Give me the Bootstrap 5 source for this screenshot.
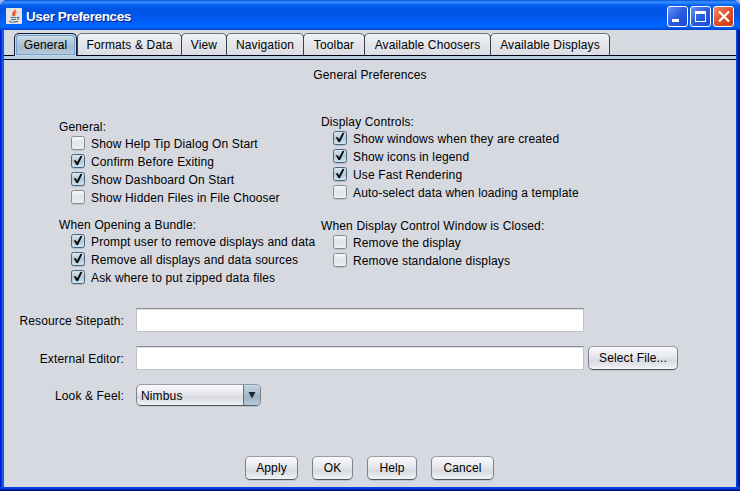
<!DOCTYPE html>
<html lang="en">
<head>
<meta charset="utf-8">
<title>User Preferences</title>
<link href="https://cdn.jsdelivr.net/npm/bootstrap@5.3.0/dist/css/bootstrap.min.css" rel="stylesheet">
<style>
body{width:740px;height:491px;overflow:hidden;background:#9fb8e8;font:12px/18px "Liberation Sans",Arial,sans-serif;letter-spacing:.14px;color:#000}
.win{width:740px;height:491px;background:linear-gradient(90deg,#0019cf 0,#0019cf 1px,#0831d9 1px,#0831d9 2px,#166aee 2px,#0855dd 4px,#0046e0 4px,#0046e0 737px,#0030d0 737px,#001590 739px);border-radius:7px 7px 0 0;padding:0 4px 4px;box-shadow:inset 0 -2px #001a9c,inset 0 -4px #0a3fe0}
.titlebar{height:30px;margin:0 -4px;padding:6px 6px 0;border-radius:7px 7px 0 0;background:linear-gradient(#0350d8 0,#3b92ff 2px,#2684ff 3px,#0863f2 5px,#0054e3 9px,#0055e5 14px,#005ff6 21px,#0066ff 25px,#0064fa 27px,#003fce 30px)}
.titlebar h1{font:bold 13.500px/20px "Liberation Sans",Arial,sans-serif;letter-spacing:-.38px;color:#fff;text-shadow:1px 1px #0a1883;margin:1px 0 0 4px}
.appicon{margin-top:2px}
.pane{height:457px;background:#d6d9e0}
.tabs{height:30px;padding:3px 0 0 10px;background:linear-gradient(#000019 0,#000019 1px,#b8cfe0 1px,#b8cfe0 4px,#000019 4px) 0 25px/100% 5px no-repeat}
.tabs .tab{height:23px;border:1px solid #33424c;border-top:1px solid #6f747c;border-bottom-color:#000019;border-radius:5px 5px 0 0;background:linear-gradient(#f2f3f6,#e4e5ea 50%,#dcdee4);text-align:center;line-height:22px;margin-right:-1px;white-space:nowrap}
.tabs .tab.active{background:linear-gradient(#d6e1ea,#adc1d0 48%,#a5bacb 55%,#bccedb);border-color:#141f33;border-bottom:0;box-shadow:inset 0 0 0 1px #c3d7e8,inset 0 0 0 2px #73a4d1;margin-right:0}
.head{margin-top:6px}
.opts{margin-top:29px;height:181px}
.colA{padding:5px 0 0 55px;margin-right:55px;box-sizing:content-box;width:207px}
.optrow{height:18px;white-space:nowrap}
.grp{padding-left:12px;margin-top:-1px}
.cb{width:14px;height:15px;margin:0 6px 2px 0;flex:none}
.second{margin-top:9px}
.third{margin-top:15px}
.form-area{padding-top:14px}
.frow{height:25px;margin-bottom:13px}
.frow:last-child{height:23px;margin-bottom:0}
.lbl{width:120px;margin-right:12px;text-align:right;line-height:26px}
.frow:last-child .lbl{line-height:24px}
.field{width:448px;height:24px;border:1px solid #c0c3c8;border-top-color:#8d8f94;border-radius:0;background:#fff;box-shadow:inset 0 1px #dcdde0;padding:0}
.nbtn{height:24px;border:1px solid #7d8188;border-color:#979ba3 #7d8188 #53575e;border-radius:5px;background:linear-gradient(#fafafc,#e7e8ec 45%,#d8dae1 60%,#e6e8ee 85%,#f2f4f8);box-shadow:0 1px #bfc2c8;padding:0;font:inherit;letter-spacing:inherit;line-height:23px;color:#000;text-align:center}
.combo{width:125px;height:22px;overflow:hidden}
.combo .val{padding-left:4px;line-height:22px}
.combo .arrow{width:17px;background:linear-gradient(#c6d6e2,#a4bacb 50%,#9ab2c5 55%,#b5cada);border-left:1px solid #55758f}
.foot{margin:49px 0 0 241px;gap:14px}
</style>
</head>
<body>
<svg class="position-absolute" width="0" height="0">
<defs>
<linearGradient id="go" x2="0" y2="1"><stop stop-color="#f9f9fb"/><stop offset=".5" stop-color="#e2e4e8"/><stop offset="1" stop-color="#f0f1f5"/></linearGradient>
<linearGradient id="gc" x2="0" y2="1"><stop stop-color="#e2eaf1"/><stop offset=".5" stop-color="#b3c8d8"/><stop offset="1" stop-color="#d2e5f3"/></linearGradient>
<linearGradient id="gb" x2="1" y2="1"><stop stop-color="#6a94f2"/><stop offset=".5" stop-color="#2a5be0"/><stop offset="1" stop-color="#1b4ccc"/></linearGradient>
<linearGradient id="gr" x2="1" y2="1"><stop stop-color="#ee8c70"/><stop offset=".5" stop-color="#e05028"/><stop offset="1" stop-color="#c83a14"/></linearGradient>
</defs>
<symbol id="off" viewBox="0 0 14 15"><rect x=".5" y="1.500" width="13" height="13" rx="2" fill="none" stroke="#bcc0c8"/><rect x=".5" y=".5" width="13" height="13" rx="2" fill="url(#go)" stroke="#878b92"/></symbol>
<symbol id="on" viewBox="0 0 14 15"><rect x=".5" y="1.500" width="13" height="13" rx="2" fill="none" stroke="#b4bcc7"/><rect x=".5" y=".5" width="13" height="13" rx="2" fill="url(#gc)" stroke="#4a6780"/><path d="M3 6.500h1.800l1.300 2.300L9.600 2H11.200L6.900 11H5.600z" fill="#000" stroke="#000" stroke-width=".3"/></symbol>
</svg>
<div class="win">
 <div class="titlebar d-flex align-items-start">
  <svg width="16" height="16" viewBox="0 0 16 16" class="appicon flex-shrink-0"><rect width="16" height="16" rx="1" fill="#e6e4e0"/><path d="M9 1.500C9.500 4 5 4.500 7.500 8M10.500 4C8 5 8 6 9 8" fill="none" stroke="#e8572a" stroke-width="1.500"/><path d="M4.500 9.500h6M5 11.500h5M3 13.500q5 1.200 9-.3M11 9.500c3-1 2 1.500 0 2" fill="none" stroke="#4f6f8a" stroke-width="1.100"/></svg>
  <h1 class="flex-grow-1">User Preferences</h1>
  <svg width="67" height="21" viewBox="0 0 67 21" class="flex-shrink-0"><g stroke="#fff"><rect x=".5" y=".5" width="20" height="20" rx="2.500" fill="url(#gb)"/><rect x="23.500" y=".5" width="20" height="20" rx="2.500" fill="url(#gb)"/><rect x="46.500" y=".5" width="20" height="20" rx="2.500" fill="url(#gr)"/></g><path d="M5 13h7v3H5zM28 5h11v11H28zm1 3v7h9V8z" fill="#fff" fill-rule="evenodd"/><path d="M52 5.500l10 10M62 5.500l-10 10" stroke="#fff" stroke-width="2.200"/></svg>
 </div>
 <div class="pane d-flex flex-column">
  <div class="tabs d-flex flex-shrink-0">
   <div class="tab active" style="width:63px">General</div><div class="tab" style="width:105px">Formats &amp; Data</div><div class="tab" style="width:46px">View</div><div class="tab" style="width:78px">Navigation</div><div class="tab" style="width:62px">Toolbar</div><div class="tab" style="width:127px">Available Choosers</div><div class="tab" style="width:120px">Available Displays</div>
  </div>
  <div class="text-center head">General Preferences</div>
  <div class="d-flex opts">
   <div class="colA">
    <div class="optrow">General:</div>
    <div class="grp">
     <div class="optrow d-flex align-items-center"><svg class="cb"><use href="#off"/></svg>Show Help Tip Dialog On Start</div>
     <div class="optrow d-flex align-items-center"><svg class="cb"><use href="#on"/></svg>Confirm Before Exiting</div>
     <div class="optrow d-flex align-items-center"><svg class="cb"><use href="#on"/></svg>Show Dashboard On Start</div>
     <div class="optrow d-flex align-items-center"><svg class="cb"><use href="#off"/></svg>Show Hidden Files in File Chooser</div>
    </div>
    <div class="optrow second">When Opening a Bundle:</div>
    <div class="grp">
     <div class="optrow d-flex align-items-center"><svg class="cb"><use href="#on"/></svg>Prompt user to remove displays and data</div>
     <div class="optrow d-flex align-items-center"><svg class="cb"><use href="#on"/></svg>Remove all displays and data sources</div>
     <div class="optrow d-flex align-items-center"><svg class="cb"><use href="#on"/></svg>Ask where to put zipped data files</div>
    </div>
   </div>
   <div class="colB">
    <div class="optrow">Display Controls:</div>
    <div class="grp">
     <div class="optrow d-flex align-items-center"><svg class="cb"><use href="#on"/></svg>Show windows when they are created</div>
     <div class="optrow d-flex align-items-center"><svg class="cb"><use href="#on"/></svg>Show icons in legend</div>
     <div class="optrow d-flex align-items-center"><svg class="cb"><use href="#on"/></svg>Use Fast Rendering</div>
     <div class="optrow d-flex align-items-center"><svg class="cb"><use href="#off"/></svg>Auto-select data when loading a template</div>
    </div>
    <div class="optrow third">When Display Control Window is Closed:</div>
    <div class="grp">
     <div class="optrow d-flex align-items-center"><svg class="cb"><use href="#off"/></svg>Remove the display</div>
     <div class="optrow d-flex align-items-center"><svg class="cb"><use href="#off"/></svg>Remove standalone displays</div>
    </div>
   </div>
  </div>
  <div class="d-flex flex-column form-area">
   <div class="d-flex align-items-start frow"><label class="lbl" for="site">Resource Sitepath:</label><input class="field" id="site"></div>
   <div class="d-flex align-items-start frow"><label class="lbl" for="editor">External Editor:</label><input class="field" id="editor"><button class="nbtn ms-1" style="width:90px">Select File...</button></div>
   <div class="d-flex align-items-start frow"><div class="lbl">Look &amp; Feel:</div><div class="nbtn combo d-flex"><span class="val flex-grow-1 text-start">Nimbus</span><span class="arrow d-flex align-items-center justify-content-center"><svg width="8" height="8" viewBox="0 0 8 8"><path d="M.5 1h7L4 7.500z" fill="#1c2730"/></svg></span></div></div>
  </div>
  <div class="d-flex foot">
   <button class="nbtn" style="width:53px">Apply</button><button class="nbtn" style="width:41px">OK</button><button class="nbtn" style="width:50px">Help</button><button class="nbtn" style="width:63px">Cancel</button>
  </div>
 </div>
</div>
<script src="https://cdn.jsdelivr.net/npm/bootstrap@5.3.0/dist/js/bootstrap.bundle.min.js"></script>
</body>
</html>
